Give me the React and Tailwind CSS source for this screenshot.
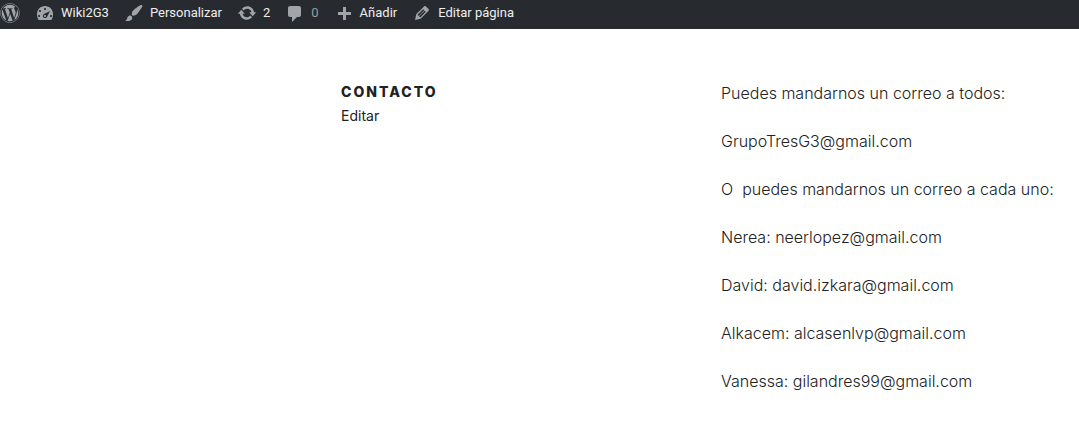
import { FaWordpress } from "react-icons/fa";

const ICONS = {
  dashboard:
    "M3.76 17h12.48c1.34-1.63 1.76-3.45 1.76-6 0-4.42-3.58-8-8-8s-8 3.58-8 8c0 2.55.42 4.37 1.76 6zM9 6c0-.55.45-1 1-1s1 .45 1 1c0 .56-.45 1-1 1s-1-.44-1-1zM4 8c0-.55.45-1 1-1s1 .45 1 1c0 .56-.45 1-1 1s-1-.44-1-1zm4.52 3.4c.84-.83 6.51-3.5 6.51-3.5s-2.66 5.68-3.49 6.51c-.84.84-2.18.84-3.02 0-.83-.83-.83-2.18 0-3.01zM3 13c0-.55.45-1 1-1s1 .45 1 1c0 .56-.45 1-1 1s-1-.44-1-1zm6 0c0 .56.45 1 1 1s1-.44 1-1c0-.55-.45-1-1-1s-1 .45-1 1zm6 0c0-.55.45-1 1-1s1 .45 1 1c0 .56-.45 1-1 1s-1-.44-1-1z",
  brush:
    "M18.33 3.57s.27-.8-.31-1.36c-.53-.52-1.22-.24-1.22-.24-.61.3-5.76 3.47-7.67 5.57-.86.96-2.06 3.79-1.09 4.82.92.98 3.96-.17 4.79-1 2.06-2.06 5.21-7.17 5.5-7.79zM1.4 17.65c2.37-1.56 1.46-3.41 3.23-4.64.93-.65 2.22-.62 3.08.29.63.67.8 2.57-.16 3.46-1.57 1.45-4 1.55-6.15.89z",
  update:
    "M10.2 3.28c3.53 0 6.43 2.61 6.92 6h2.08l-3.5 4-3.5-4h2.32c-.45-1.97-2.21-3.45-4.32-3.45-1.45 0-2.73.71-3.54 1.78L4.95 5.66C6.23 4.2 8.11 3.28 10.2 3.28zm-.4 13.44c-3.52 0-6.43-2.61-6.92-6H.8l3.5-4c1.17 1.33 2.33 2.67 3.5 4H5.48c.45 1.97 2.21 3.45 4.32 3.45 1.45 0 2.73-.71 3.54-1.78l1.71 1.95c-1.28 1.46-3.15 2.38-5.25 2.38z",
  comment:
    "M5 3h9c1.1 0 2 .9 2 2v7c0 1.1-.9 2-2 2h-2l-5 5v-5H5c-1.1 0-2-.9-2-2V5c0-1.1.9-2 2-2z",
  plus: "M17 9v3h-5v5H9v-5H4V9h5V4h3v5h5z",
  edit: "M13.89 3.39l2.71 2.72c.46.46.42 1.24.03 1.64l-8.01 8.02-5.56 1.16 1.16-5.58s7.6-7.63 7.99-8.03c.39-.39 1.22-.39 1.68.07zm-2.73 2.79l-5.59 5.61 1.11 1.11 5.54-5.65zm-2.97 8.23l5.58-5.6-1.07-1.08-5.59 5.6z",
};

function BarLink({ icon, children, muted }) {
  return (
    <a
      href="#"
      className={
        "flex items-center gap-1.5 whitespace-nowrap " +
        (muted ? "text-[#9a9da1]" : "text-[#eeeeee]")
      }
    >
      <svg viewBox="0 0 20 20" aria-hidden="true" className="size-5 shrink-0 fill-[#a0a5aa]">
        <path d={ICONS[icon]} />
      </svg>
      {children}
    </a>
  );
}

const LINES = [
  "Puedes mandarnos un correo a todos:",
  "GrupoTresG3@gmail.com",
  "O\u00a0 puedes mandarnos un correo a cada uno:",
  "Nerea: neerlopez@gmail.com",
  "David: david.izkara@gmail.com",
  "Alkacem: alcasenlvp@gmail.com",
  "Vanessa: gilandres99@gmail.com",
];

export default function App() {
  return (
    <div className="min-h-screen bg-white text-[#222222]">
      <nav className="flex h-[29px] items-center gap-[15px] bg-[#272b30] pb-[3px] font-['Roboto',sans-serif] text-[13px]">
        <a href="#" aria-label="WordPress">
          <FaWordpress className="size-5 text-[#a0a5aa]" />
        </a>
        <BarLink icon="dashboard">Wiki2G3</BarLink>
        <BarLink icon="brush">Personalizar</BarLink>
        <BarLink icon="update">2</BarLink>
        <BarLink icon="comment" muted>0</BarLink>
        <BarLink icon="plus">Añadir</BarLink>
        <BarLink icon="edit">Editar página</BarLink>
      </nav>
      <main className="flex pt-[52px] pl-[341px] font-['Inter',sans-serif]">
        <header className="w-[380px] shrink-0">
          <h1 className="text-[14px] leading-[22px] font-extrabold tracking-[2px] uppercase">
            Contacto
          </h1>
          <a href="#" className="block text-[14px] leading-[26px]">
            Editar
          </a>
        </header>
        <div className="flex flex-col gap-6 text-[16px] leading-6 font-light">
          {LINES.map((line) => (
            <p key={line}>{line}</p>
          ))}
        </div>
      </main>
    </div>
  );
}
